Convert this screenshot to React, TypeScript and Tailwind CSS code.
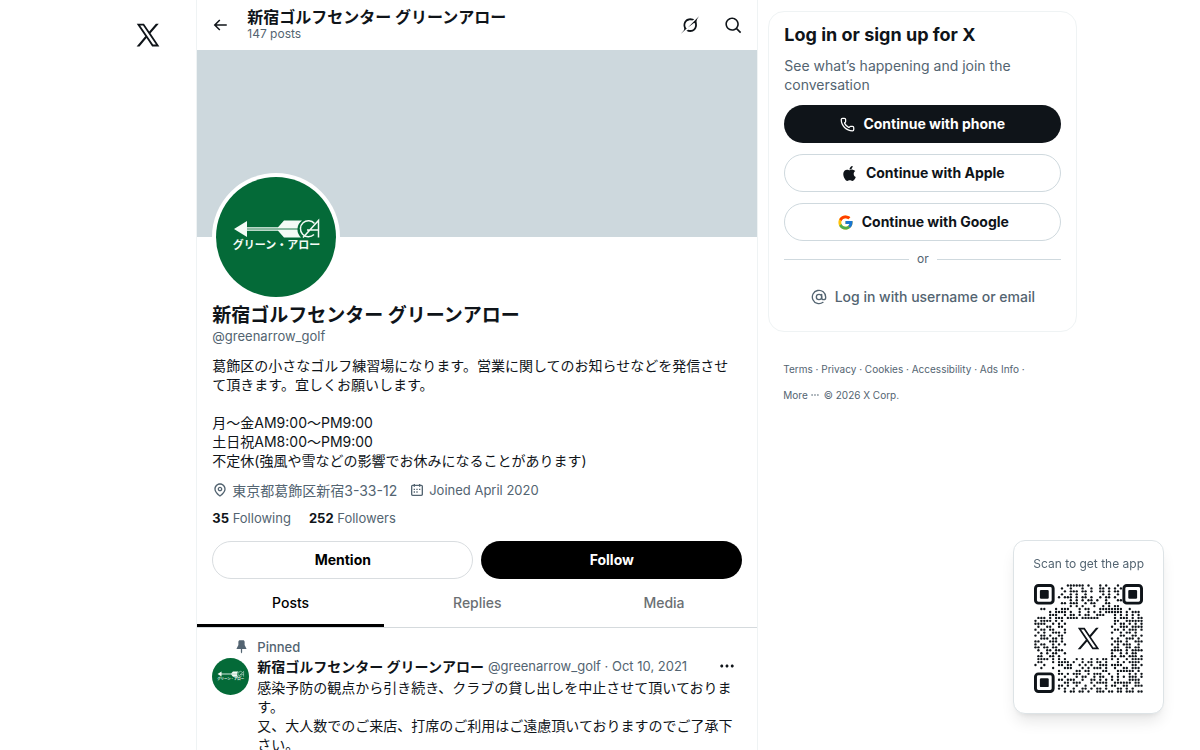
import React from 'react';
import { AtSign, Phone } from 'lucide-react';
import { FaApple } from 'react-icons/fa';
import { FcGoogle } from 'react-icons/fc';

const PATHS = {
  x: 'M21.742 21.75l-7.563-11.179 7.056-8.321h-2.456l-5.691 6.714-4.54-6.714H2.359l7.29 10.776L2.25 21.75h2.456l6.035-7.118 4.818 7.118h6.191-.008zM7.739 3.818L18.81 20.182h-2.447L5.29 3.818h2.447z',
  back: 'M7.414 13l5.043 5.04-1.414 1.42L3.586 12l7.457-7.46 1.414 1.42L7.414 11H21v2H7.414z',
  search:
    'M10.25 3.75c-3.59 0-6.5 2.91-6.5 6.5s2.91 6.5 6.5 6.5c1.795 0 3.419-.726 4.596-1.904 1.178-1.177 1.904-2.801 1.904-4.596 0-3.59-2.91-6.5-6.5-6.5zm-8.5 6.5c0-4.694 3.806-8.5 8.5-8.5s8.5 3.806 8.5 8.5c0 1.986-.682 3.815-1.824 5.262l4.781 4.781-1.414 1.414-4.781-4.781c-1.447 1.142-3.276 1.824-5.262 1.824-4.694 0-8.5-3.806-8.5-8.5z',
  location:
    'M12 7c-1.93 0-3.5 1.57-3.5 3.5S10.07 14 12 14s3.5-1.57 3.5-3.5S13.93 7 12 7zm0 5c-.827 0-1.5-.673-1.5-1.5S11.173 9 12 9s1.5.673 1.5 1.5S12.827 12 12 12zm0-10c-4.687 0-8.5 3.813-8.5 8.5 0 5.967 7.621 11.116 7.945 11.332l.555.37.555-.37c.324-.216 7.945-5.365 7.945-11.332C20.5 5.813 16.687 2 12 2zm0 17.77c-1.665-1.241-6.5-5.196-6.5-9.27C5.5 6.916 8.416 4 12 4s6.5 2.916 6.5 6.5c0 4.073-4.835 8.028-6.5 9.27z',
  calendar:
    'M7 4V3h2v1h6V3h2v1h1.5C19.89 4 21 5.12 21 6.5v12c0 1.38-1.11 2.5-2.5 2.5h-13C4.12 21 3 19.88 3 18.5v-12C3 5.12 4.12 4 5.5 4H7zm0 2H5.5c-.27 0-.5.22-.5.5v12c0 .28.23.5.5.5h13c.28 0 .5-.22.5-.5v-12c0-.28-.22-.5-.5-.5H17v1h-2V6H9v1H7V6zm0 6h2v-2H7v2zm0 4h2v-2H7v2zm4-4h2v-2h-2v2zm0 4h2v-2h-2v2zm4-4h2v-2h-2v2z',
  pin: 'M7 4.5C7 3.12 8.12 2 9.5 2h5C15.88 2 17 3.12 17 4.5v5.26L20.12 16H13v5l-1 2-1-2v-5H3.88L7 9.76V4.5z',
  more: 'M3 12c0-1.1.9-2 2-2s2 .9 2 2-.9 2-2 2-2-.9-2-2zm9 2c1.1 0 2-.9 2-2s-.9-2-2-2-2 .9-2 2 .9 2 2 2zm7 0c1.1 0 2-.9 2-2s-.9-2-2-2-2 .9-2 2 .9 2 2 2z',
};

const GROK_PATH =
  'M12.745 20.54l10.97-8.19c.539-.4 1.307-.244 1.564.38 1.349 3.288.746 7.241-1.938 9.955-2.683 2.714-6.417 3.31-9.83 1.954l-3.728 1.745c5.347 3.697 11.84 2.782 15.898-1.324 3.219-3.255 4.216-7.692 3.284-11.693l.008.009c-1.351-5.878.332-8.227 3.782-13.031L33 0l-4.54 4.59v-.014L12.743 20.544m-2.263 1.987c-3.837-3.707-3.175-9.446.1-12.755 2.42-2.449 6.388-3.448 9.852-1.979l3.72-1.737c-.67-.49-1.53-1.017-2.515-1.387-4.455-1.854-9.789-.931-13.41 2.728-3.483 3.523-4.579 8.94-2.697 13.561 1.405 3.454-.899 5.898-3.22 8.364C1.49 30.2.666 31.074 0 32l10.478-9.466';

const NAME = '新宿ゴルフセンター グリーンアロー';
const HANDLE = '@greenarrow_golf';

const BIO = `葛飾区の小さなゴルフ練習場になります。営業に関してのお知らせなどを発信させて頂きます。宜しくお願いします。

月〜金AM9:00〜PM9:00
土日祝AM8:00〜PM9:00
不定休(強風や雪などの影響でお休みになることがあります)`;

const PINNED_TEXT = `感染予防の観点から引き続き、クラブの貸し出しを中止させて頂いております。
又、大人数でのご来店、打席のご利用はご遠慮頂いておりますのでご了承下さい。`;

// 37x37 modules, finder squares and the logo area are left blank
const QR_ROWS = [
  '...........######.#...#.#...#........',
  '.........#..#...#..#..##.#.#.#.......',
  '..........#.###.##.#..##.#.##........',
  '.........#..#.#..#.....#.#..#........',
  '........#.###.#.##.#..#.##.#.........',
  '............#.#.#.##.#..#...##.......',
  '.........##.###..#.##...##...........',
  '............#.#.#...#..#.#.##........',
  '..##...#.###...#.##...########..#....',
  '.....#.####.#..#..#.#.#.######.#.###.',
  '.....###..#.##.#.##..###...#.#.#.#.#.',
  '.###.#.###.####.######.....#.###.#.##',
  '#.####.#.#.................##..######',
  '####..#.#.#................#.##.#.#.#',
  '.#..##..##................#..###.####',
  '#.##.##...#................##.#.###.#',
  '.#.#..###.#...............#..#.##.#..',
  '#.##.#..##...................##..##.#',
  '..###.##.#................#.#..###.#.',
  '##...###.#.................###.#..###',
  '#.##..#.#.#...............#.#.###..#.',
  '##.##.##...................##..##.##.',
  '.#..##.###................####.#.####',
  '..#.#.##..#...............#..#.#.##..',
  '.##..##.#.................##.##.###.#',
  '.####.#.#.#...#.#..#.#.##.#.#..#.####',
  '.##...#.####.#..#.##.##.#...#.#.####.',
  '#..#....##.##..#.#.#..###.####...##.#',
  '..#...#...###...#.#.###.#..#..##.###.',
  '........#.....##.##....##...######.#.',
  '........##.#.###..#.###..#..#...#.#.#',
  '..........#...#.##..#.##..#.#.#.###.#',
  '........##.###..#..##.#.#.#.#...####.',
  '..........##.###...#.####..######.##.',
  '........##.#..#..#..#...#.##..##..###',
  '........#.#..#..##.#.##.#...##.#.#...',
  '..........#.##.##.#..###.##.##.###.##',
];

const Icon: React.FC<{ d: string; className?: string }> = ({ d, className }) => (
  <svg viewBox="0 0 24 24" fill="currentColor" aria-hidden="true" className={className}>
    <path d={d} />
  </svg>
);

// Arrow emblem on a green disc, katakana wordmark underneath
const ClubLogo: React.FC<{ className?: string }> = ({ className }) => (
  <svg viewBox="0 0 120 120" className={className} role="img" aria-label="グリーン・アロー">
    <circle cx="60" cy="60" r="60" fill="#046a38" />
    <path fill="#f4fbf6" d="M18 52L31 44V50.200H62L68 43.500H86A11 11 0 0 0 85 60.500H68L62 53.800H31V60Z" />
    <path stroke="#046a38" strokeWidth="0.900" d="M31 52H84" />
    <g fill="none" stroke="#f4fbf6" strokeWidth="1.500">
      <path d="M98.500 46.500A8 8 0 1 0 98 57.500" />
      <path d="M87 60.500L102.500 43.500V60.500M91 53H102.500" />
    </g>
    <text
      x="60.500"
      y="72"
      textAnchor="middle"
      fontSize="11"
      fontWeight="700"
      fill="#f4fbf6"
      fontFamily="'Noto Sans CJK JP', sans-serif"
    >
      グリーン・アロー
    </text>
  </svg>
);

const Finder: React.FC<{ x: number; y: number }> = ({ x, y }) => (
  <g>
    <rect x={x + 0.5} y={y + 0.5} width="6" height="6" rx="1" fill="none" stroke="#0f1419" />
    <rect x={x + 2} y={y + 2} width="3" height="3" rx="0.4" fill="#0f1419" />
  </g>
);

const QrCode: React.FC = () => (
  <svg viewBox="0 0 37 37" className="w-[109px] h-[109px]" role="img" aria-label="QR code">
    {QR_ROWS.map((row, y) =>
      row.split('').map((cell, x) =>
        cell === '#' ? <circle key={`${x}-${y}`} cx={x + 0.5} cy={y + 0.5} r="0.4" fill="#0f1419" /> : null
      )
    )}
    <Finder x={0} y={0} />
    <Finder x={30} y={0} />
    <Finder x={0} y={30} />
    <svg x="14" y="14" width="9" height="9" viewBox="0 0 24 24">
      <path d={PATHS.x} fill="#0f1419" />
    </svg>
  </svg>
);

const ProfileColumn: React.FC = () => (
  <main className="min-w-0 border-x border-[#eff3f4]">
    <div className="flex h-[50px] items-center px-[14px]">
      <button type="button" aria-label="Back" className="mr-[18px]">
        <Icon d={PATHS.back} className="w-[18px] h-[18px]" />
      </button>
      <div className="min-w-0 flex-1 pb-[3px]">
        <h2 className="truncate text-base leading-5 font-bold">{NAME}</h2>
        <p className="text-xs leading-[14px] text-[#536471]">147 posts</p>
      </div>
      <div className="flex items-center gap-[25px]">
        <button type="button" aria-label="Grok">
          <svg viewBox="0 0 33 32" fill="currentColor" className="w-[18px] h-[18px]">
            <path d={GROK_PATH} />
          </svg>
        </button>
        <button type="button" aria-label="Search">
          <Icon d={PATHS.search} className="w-[19px] h-[19px]" />
        </button>
      </div>
    </div>

    <div className="aspect-[3/1] bg-[#cdd8dd]" />

    <section className="px-[15px]">
      <div className="-mt-16 w-32 h-32 rounded-full bg-white p-1">
        <ClubLogo className="w-full h-full" />
      </div>

      <h1 className="mt-1 text-[19px] leading-[22px] font-bold">{NAME}</h1>
      <p className="text-[13px] leading-[19px] text-[#536471]">{HANDLE}</p>
      <p className="mt-[10px] whitespace-pre-wrap pr-2 text-sm leading-[19px]">{BIO}</p>

      <div className="mt-[11px] flex flex-wrap gap-x-3 text-sm leading-[19px] text-[#536471]">
        <span className="flex items-center gap-1">
          <Icon d={PATHS.location} className="w-4 h-4" />
          東京都葛飾区新宿3-33-12
        </span>
        <span className="flex items-center gap-1 text-[13px]">
          <Icon d={PATHS.calendar} className="w-4 h-4" />
          Joined April 2020
        </span>
      </div>

      <div className="mt-[9px] flex gap-[18px] text-[13px] leading-[19px] text-[#536471]">
        <a href="#following">
          <b className="text-[#0f1419]">35</b> Following
        </a>
        <a href="#followers">
          <b className="text-[#0f1419]">252</b> Followers
        </a>
      </div>

      <div className="mt-[13px] grid grid-cols-2 gap-2 text-sm font-bold">
        <button type="button" className="h-[38px] rounded-full border border-[#d9dde0] text-black">
          Mention
        </button>
        <button type="button" className="h-[38px] rounded-full bg-black text-white">
          Follow
        </button>
      </div>
    </section>

    <nav className="grid h-[49px] grid-cols-3 border-b border-[#d5dadd] text-sm font-medium text-[#6b6f73]">
      <a href="#posts" className="flex items-center justify-center border-b-3 border-black pt-[3px] text-black">
        Posts
      </a>
      <a href="#replies" className="flex items-center justify-center">
        Replies
      </a>
      <a href="#media" className="flex items-center justify-center">
        Media
      </a>
    </nav>

    <article className="px-[15px] pt-[11px]">
      <div className="flex items-center gap-2 pl-[22px] text-[13px] leading-4 font-medium text-[#536471]">
        <Icon d={PATHS.pin} className="w-[15px] h-[15px]" />
        Pinned
      </div>
      <div className="flex gap-2">
        <ClubLogo className="mt-[3px] w-[37px] h-[37px] shrink-0" />
        <div className="min-w-0 flex-1 text-sm leading-[19px]">
          <div className="flex items-center pt-[2px]">
            <b className="truncate">{NAME}</b>
            <span className="ml-1 shrink-0 text-[13px] text-[#536471]">{HANDLE} · Oct 10, 2021</span>
            <button type="button" aria-label="More" className="ml-auto mr-[6px]">
              <Icon d={PATHS.more} className="w-[18px] h-[18px]" />
            </button>
          </div>
          <p className="mt-[2px] whitespace-pre-wrap">{PINNED_TEXT}</p>
        </div>
      </div>
    </article>
  </main>
);

const LoginPanel: React.FC = () => (
  <aside className="max-w-[319px] pl-[10px] pt-[11px]">
    <section className="rounded-2xl border border-[#eff3f4] px-[15px] pt-[11px] pb-[15px]">
      <h2 className="text-lg leading-6 font-bold">Log in or sign up for X</h2>
      <p className="mt-[9px] text-sm leading-[19px] text-[#536471]">See what’s happening and join the conversation</p>
      <div className="mt-[11px] flex flex-col gap-[11px] text-sm font-bold">
        <button
          type="button"
          className="flex h-[38px] items-center justify-center gap-2 rounded-full bg-[#0f1419] text-white"
        >
          <Phone className="w-[15px] h-[15px]" />
          Continue with phone
        </button>
        <button
          type="button"
          className="flex h-[38px] items-center justify-center gap-2 rounded-full border border-[#cfd9de]"
        >
          <FaApple className="w-[17px] h-[17px]" />
          Continue with Apple
        </button>
        <button
          type="button"
          className="flex h-[38px] items-center justify-center gap-2 rounded-full border border-[#cfd9de]"
        >
          <FcGoogle className="w-[17px] h-[17px]" />
          Continue with Google
        </button>
      </div>
      <div className="mt-[10px] flex items-center gap-2 text-xs leading-4 text-[#536471]">
        <span className="h-px flex-1 bg-[#cfd9de]" />
        or
        <span className="h-px flex-1 bg-[#cfd9de]" />
      </div>
      <button
        type="button"
        className="mt-[11px] flex h-[38px] w-full items-center justify-center gap-2 text-sm font-medium text-[#536471]"
      >
        <AtSign className="w-4 h-4" />
        Log in with username or email
      </button>
    </section>

    <footer className="mt-6 px-[15px] text-[10px] leading-[26px] text-[#536471]">
      <a href="#terms">Terms</a> · <a href="#privacy">Privacy</a> · <a href="#cookies">Cookies</a> ·{' '}
      <a href="#accessibility">Accessibility</a> · <a href="#ads">Ads Info</a> ·
      <div className="flex items-center gap-1">
        <button type="button" className="flex items-center gap-[2px]">
          More
          <Icon d={PATHS.more} className="w-[10px] h-[10px]" />
        </button>
        <span>© 2026 X Corp.</span>
      </div>
    </footer>
  </aside>
);

export default function App() {
  return (
    <div className="h-screen overflow-hidden bg-white font-['Inter','Noto_Sans_CJK_JP',sans-serif] text-[#0f1419]">
      <div className="grid grid-cols-[minmax(64px,4fr)_minmax(0,562px)_minmax(320px,9fr)]">
        <header className="flex items-start justify-end pr-[34px] pt-[21px]">
          <a href="#home" aria-label="X">
            <Icon d={PATHS.x} className="w-7 h-7" />
          </a>
        </header>
        <ProfileColumn />
        <LoginPanel />
      </div>

      <div className="fixed right-9 bottom-9 flex flex-col items-center gap-3 rounded-xl border border-[#dde3e6] bg-white px-[19px] pt-[15px] pb-5 shadow-lg">
        <p className="text-xs leading-4 text-[#536471]">Scan to get the app</p>
        <QrCode />
      </div>
    </div>
  );
}
